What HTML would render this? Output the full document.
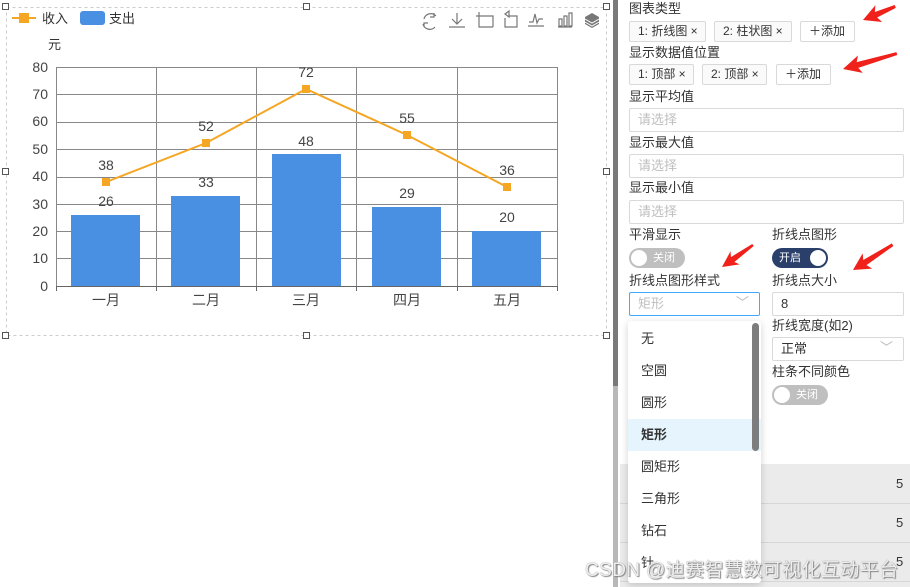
<!DOCTYPE html>
<html><head><meta charset="utf-8"><style>
*{margin:0;padding:0;box-sizing:border-box}
body{width:910px;height:587px;position:relative;overflow:hidden;background:#fff;font-family:"Liberation Sans","Noto Sans CJK SC",sans-serif;color:#333;font-size:13px}
.a{position:absolute}
.lbl{position:absolute;left:629px;font-size:13px;color:#333;line-height:16px}
.tag{position:absolute;height:21px;border:1px solid #d9d9d9;background:#fafafa;border-radius:2px;font-size:12px;line-height:19px;padding-left:8px;color:#333}
.inp{position:absolute;left:629px;width:275px;height:24px;border:1px solid #d9d9d9;border-radius:2px;font-size:13px;color:#bfbfbf;line-height:22px;padding-left:8px}
.tg{position:absolute;width:56px;height:20px;border-radius:10px;font-size:11px;color:#fff;line-height:20px}
.tg i{position:absolute;top:2px;width:16px;height:16px;border-radius:50%;background:#fff}
.dd div{height:32px;line-height:32px;padding-left:13px;font-size:13px;color:#333}
</style></head><body>
<svg class="a" style="left:0;top:0" width="612" height="340">
<rect x="6.5" y="7.5" width="600" height="328" fill="none" stroke="#ccc" stroke-dasharray="3,3"/>
<g fill="#fff" stroke="#555" stroke-width="1">
<rect x="2.5" y="3.5" width="6" height="6"/><rect x="303.5" y="3.5" width="6" height="6"/><rect x="603.5" y="3.5" width="6" height="6"/>
<rect x="2.5" y="168.5" width="6" height="6"/><rect x="603.5" y="168.5" width="6" height="6"/>
<rect x="2.5" y="332.5" width="6" height="6"/><rect x="303.5" y="332.5" width="6" height="6"/><rect x="603.5" y="332.5" width="6" height="6"/>
</g>
<line x1="12" y1="18" x2="36" y2="18" stroke="#f5a623" stroke-width="2"/><rect x="19" y="13" width="10" height="10" fill="#f5a623"/>
<text x="42" y="23" font-size="13" fill="#333">收入</text>
<rect x="80" y="11" width="25" height="14" rx="3" fill="#4a90e2"/>
<text x="109" y="23" font-size="13" fill="#333">支出</text>
<text x="48" y="49" font-size="13" fill="#333">元</text>
<g stroke="#888" stroke-width="1" fill="none">
<path d="M56.5 67.5H557M56.5 94.5H557M56.5 122.5H557M56.5 149.5H557M56.5 177.5H557M56.5 204.5H557M56.5 231.5H557M56.5 258.5H557"/>
<path d="M56.5 67V286M156.5 67V286M256.5 67V286M356.5 67V286M457.5 67V286M557.5 67V286"/>
<path d="M56.5 286.5H557M56.5 286V291M156.5 286V291M256.5 286V291M356.5 286V291M457.5 286V291M557.5 286V291" stroke="#666"/>
</g>
<g font-size="14" fill="#444" text-anchor="end">
<text x="48" y="72">80</text><text x="48" y="99">70</text><text x="48" y="126">60</text><text x="48" y="154">50</text><text x="48" y="181">40</text><text x="48" y="209">30</text><text x="48" y="236">20</text><text x="48" y="263">10</text><text x="48" y="291">0</text>
</g>
<g fill="#4a90e2">
<rect x="71" y="215" width="69" height="71"/><rect x="171" y="196" width="69" height="90"/><rect x="272" y="154" width="69" height="132"/><rect x="372" y="207" width="69" height="79"/><rect x="472" y="231" width="69" height="55"/>
</g>
<polyline points="106,182 206,143 306,89 407,135 507,187" fill="none" stroke="#f5a623" stroke-width="2"/>
<g fill="#f5a623"><rect x="102" y="178" width="8" height="8"/><rect x="202" y="139" width="8" height="8"/><rect x="302" y="85" width="8" height="8"/><rect x="403" y="131" width="8" height="8"/><rect x="503" y="183" width="8" height="8"/></g>
<g font-size="14" fill="#444" text-anchor="middle">
<text x="106" y="170">38</text><text x="206" y="131">52</text><text x="306" y="77">72</text><text x="407" y="123">55</text><text x="507" y="175">36</text>
<text x="106" y="206">26</text><text x="206" y="187">33</text><text x="306" y="146">48</text><text x="407" y="198">29</text><text x="507" y="222">20</text>
<text x="106" y="305">一月</text><text x="206" y="305">二月</text><text x="306" y="305">三月</text><text x="407" y="305">四月</text><text x="507" y="305">五月</text>
</g>
<g fill="none" stroke="#777" stroke-width="1.2">
<path d="M436 16a7 7 0 0 0-12 3M423 24a7 7 0 0 0 12 3M434 13v4h-4M424 27v-4h4"/>
<path d="M457 13v11M452 19l5 5 5-5M449 27h16"/>
<path d="M479 12v15h14M476 16h17v11"/>
<path d="M505 18v9h12v-11h-8M505 14l4-3v6z"/>
<path d="M528 26h16M529 22h4l2-8 2 9 2-4h4"/>
<path d="M558 27h14M559 19h3v7h-3zM564 16h3v10h-3zM569 13h3v13h-3z"/>
</g>
<path d="M592 13l7 4v7l-7 4-7-4v-7z" fill="#777"/><path d="M585 19l7 4 7-4M585 22l7 4 7-4" stroke="#fff" fill="none"/>
</svg>
<div class="a" style="left:613px;top:0;width:5px;height:386px;background:#7a7a7a"></div>
<div class="a" style="left:613px;top:386px;width:5px;height:201px;background:#b8b8b8"></div>
<div class="a" style="left:620px;top:464px;width:290px;height:123px;background:#ebebeb"></div>
<div class="a" style="left:620px;top:503px;width:290px;height:1px;background:#d6d6d6"></div>
<div class="a" style="left:620px;top:542px;width:290px;height:1px;background:#d6d6d6"></div>
<div class="a" style="left:620px;top:581px;width:290px;height:1px;background:#d6d6d6"></div>
<div class="a" style="left:896px;top:476px;font-size:13px">5</div>
<div class="a" style="left:896px;top:515px;font-size:13px">5</div>
<div class="a" style="left:896px;top:554px;font-size:13px">5</div>

<div class="lbl" style="top:1px">图表类型</div>
<div class="tag" style="left:629px;top:21px;width:77px">1: 折线图 ×</div>
<div class="tag" style="left:714px;top:21px;width:78px">2: 柱状图 ×</div>
<div class="tag" style="left:800px;top:21px;width:55px;background:#fff">＋添加</div>
<div class="lbl" style="top:45px">显示数据值位置</div>
<div class="tag" style="left:629px;top:64px;width:65px">1: 顶部 ×</div>
<div class="tag" style="left:702px;top:64px;width:65px">2: 顶部 ×</div>
<div class="tag" style="left:776px;top:64px;width:55px;background:#fff">＋添加</div>
<div class="lbl" style="top:89px">显示平均值</div>
<div class="inp" style="top:108px">请选择</div>
<div class="lbl" style="top:135px">显示最大值</div>
<div class="inp" style="top:154px">请选择</div>
<div class="lbl" style="top:180px">显示最小值</div>
<div class="inp" style="top:200px">请选择</div>
<div class="lbl" style="top:227px">平滑显示</div>
<div class="lbl" style="top:227px;left:772px">折线点图形</div>
<div class="tg" style="left:629px;top:248px;background:#bfbfbf;padding-left:24px"><i style="left:2px"></i>关闭</div>
<div class="tg" style="left:772px;top:248px;background:#2b3f6b;padding-left:7px">开启<i style="right:2px"></i></div>
<div class="lbl" style="top:273px">折线点图形样式</div>
<div class="lbl" style="top:273px;left:772px">折线点大小</div>
<div class="inp" style="top:292px;width:131px;border-color:#40a9ff">矩形<span style="position:absolute;right:10px;top:-1px;color:#bbb">﹀</span></div>
<div class="inp" style="top:292px;left:772px;width:132px;color:#333">8</div>
<div class="lbl" style="top:318px;left:772px">折线宽度(如2)</div>
<div class="inp" style="top:337px;left:772px;width:132px;color:#333">正常<span style="position:absolute;right:10px;top:-1px;color:#bbb">﹀</span></div>
<div class="lbl" style="top:364px;left:772px">柱条不同颜色</div>
<div class="tg" style="left:772px;top:385px;background:#bfbfbf;padding-left:24px"><i style="left:2px"></i>关闭</div>

<div class="a dd" style="left:628px;top:321px;width:133px;height:262px;background:#fff;box-shadow:0 2px 8px rgba(0,0,0,.18);border-radius:3px;overflow:hidden;padding-top:2px">
<div>无</div><div>空圆</div><div>圆形</div><div style="background:#e6f5fd;font-weight:bold">矩形</div><div>圆矩形</div><div>三角形</div><div>钻石</div><div>针</div>
<span class="a" style="left:124px;top:2px;width:7px;height:128px;background:#7d7d7d;border-radius:4px"></span>
</div>
<svg class="a" style="left:620px;top:0" width="290" height="290">
<g fill="#f0201a">
<polygon transform="translate(243,20) rotate(-22)" points="0,0 17,-9 14,-3 35,-2 35,1 14,3 17,9"/>
<polygon transform="translate(223,69) rotate(-15.5)" points="0,0 18,-9 15,-3 56,-2 56,1 15,3 18,9"/>
<polygon transform="translate(102,267) rotate(-35)" points="0,0 16,-8 13,-3 38,-1.5 38,1 13,3 16,8"/>
<polygon transform="translate(233,270) rotate(-32)" points="0,0 17,-9 14,-3 47,-2 47,1 14,3 17,9"/>
</g>
</svg>
<div class="a" style="left:585px;top:555px;font-size:19px;color:#eee;text-shadow:0 0 1px #777,1px 1px 1px #888;letter-spacing:0.4px;white-space:nowrap">CSDN @迪赛智慧数可视化互动平台</div>
</body></html>
